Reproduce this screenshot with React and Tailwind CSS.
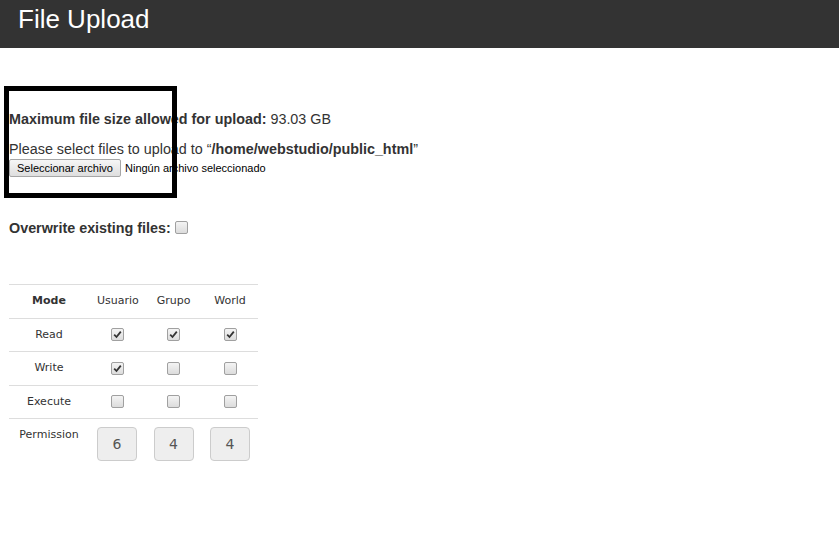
import React from "react";

const Check = ({ checked }) => (
  <span className="inline-flex h-[13px] w-[13px] items-center justify-center rounded-[2px] border border-[#a0a0a0] bg-gradient-to-b from-[#f4f4f4] to-[#dcdcdc] align-middle">
    {checked && (
      <svg width="9" height="9" viewBox="0 0 9 9">
        <path d="M1.2 4.6 L3.5 7 L7.8 1.6" fill="none" stroke="#333" strokeWidth="1.8" />
      </svg>
    )}
  </span>
);

const App = () => {
  const rows = [
    { mode: "Read", u: true, g: true, w: true },
    { mode: "Write", u: true, g: false, w: false },
    { mode: "Execute", u: false, g: false, w: false },
  ];

  return (
    <div className="relative min-h-[543px] bg-white text-[#333] font-['Liberation_Sans',Arial,sans-serif]">
      {/* HEADER */}
      <div className="h-[48px] bg-[#333] px-[18px]">
        <h1 className="text-[26px] leading-[38px] text-white">File Upload</h1>
      </div>

      <div className="px-[9px]">
        <p className="mt-[61px] text-[14.35px] leading-[20px]">
          <b>Maximum file size allowed for upload:</b> 93.03 GB
        </p>
        <p className="mt-[10px] text-[14.35px] leading-[20px]">
          Please select files to upload to &ldquo;<b>/home/webstudio/public_html</b>&rdquo;
        </p>
        <div className="flex items-center text-[11px]">
          <button className="h-[18px] rounded-[2px] border border-[#a6a6a6] bg-gradient-to-b from-[#f6f6f6] to-[#dedede] px-[7px] leading-[16px] text-black">
            Seleccionar archivo
          </button>
          <span className="ml-[4px] text-black">Ningún archivo seleccionado</span>
        </div>

        <p className="mt-[41px] flex items-center text-[14.35px] leading-[20px]">
          <b>Overwrite existing files:</b>
          <span className="ml-[4px] -mt-[2px] flex">
            <Check checked={false} />
          </span>
        </p>

        {/* PERMISSIONS TABLE */}
        <table className="mt-[46px] w-[249px] table-fixed border-collapse text-[11px] leading-[16.5px] font-['DejaVu_Sans',Verdana,sans-serif]">
          <thead>
            <tr className="border-t border-[#ddd]">
              <th className="w-[80px] p-[8px] text-center font-bold">Mode</th>
              <th className="w-[56px] p-[8px] text-center font-normal">Usuario</th>
              <th className="w-[57px] p-[8px] text-center font-normal">Grupo</th>
              <th className="w-[56px] p-[8px] text-center font-normal">World</th>
            </tr>
          </thead>
          <tbody>
            {rows.map((r) => (
              <tr key={r.mode} className="border-t border-[#ddd]">
                <td className="p-[8px] text-center">{r.mode}</td>
                <td className="p-[8px] text-center"><Check checked={r.u} /></td>
                <td className="p-[8px] text-center"><Check checked={r.g} /></td>
                <td className="p-[8px] text-center"><Check checked={r.w} /></td>
              </tr>
            ))}
            <tr className="border-t border-[#ddd]">
              <td className="p-[8px] text-center align-top">Permission</td>
              {["6", "4", "4"].map((v, i) => (
                <td key={i} className="p-[8px] text-center">
                  <span className="mx-auto flex h-[34px] w-[40px] items-center justify-center rounded-[4px] border border-[#ccc] bg-[#eee] text-[14px] text-[#555]">
                    {v}
                  </span>
                </td>
              ))}
            </tr>
          </tbody>
        </table>
      </div>

      {/* highlight box overlay */}
      <div className="pointer-events-none absolute left-[4px] top-[86px] h-[112px] w-[173px] border-[5px] border-black" />
    </div>
  );
};

export default App;
